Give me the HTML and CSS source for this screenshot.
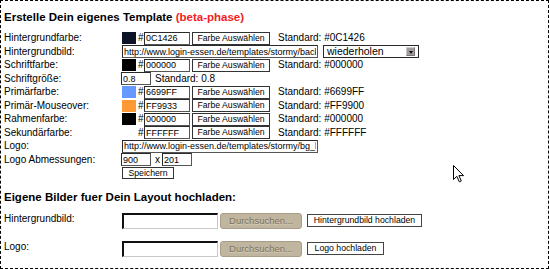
FILE: index.html
```html
<!DOCTYPE html>
<html lang="de">
<head>
<meta charset="utf-8">
<title>Template</title>
<link rel="stylesheet" href="styles.css">
</head>
<body>
<div class="page">
  <h1 class="title">Erstelle Dein eigenes Template <span class="beta">(beta-phase)</span></h1>
  <div class="form">
    <div class="lbl">Hintergrundfarbe:</div>
    <div class="ctl"><span class="sw sw-navy"></span><span class="hash">#</span><input class="inp hex" type="text" value="0C1426"><button class="btn pick">Farbe Auswählen</button><span class="std">Standard: #0C1426</span></div>

    <div class="lbl">Hintergrundbild:</div>
    <div class="ctl"><input class="inp url" type="text" value="http://www.login-essen.de/templates/stormy/backgrounds/bg.jpg"><span class="selwrap"><select class="sel"><option>wiederholen</option></select><span class="arrow"></span></span></div>

    <div class="lbl">Schriftfarbe:</div>
    <div class="ctl"><span class="sw sw-black"></span><span class="hash">#</span><input class="inp hex" type="text" value="000000"><button class="btn pick">Farbe Auswählen</button><span class="std">Standard: #000000</span></div>

    <div class="lbl">Schriftgröße:</div>
    <div class="ctl"><input class="inp small first" type="text" value="0.8"><span class="std std-near">Standard: 0.8</span></div>

    <div class="lbl">Primärfarbe:</div>
    <div class="ctl"><span class="sw sw-blue"></span><span class="hash">#</span><input class="inp hex" type="text" value="6699FF"><button class="btn pick">Farbe Auswählen</button><span class="std">Standard: #6699FF</span></div>

    <div class="lbl">Primär-Mouseover:</div>
    <div class="ctl"><span class="sw sw-orange"></span><span class="hash">#</span><input class="inp hex" type="text" value="FF9933"><button class="btn pick">Farbe Auswählen</button><span class="std">Standard: #FF9900</span></div>

    <div class="lbl">Rahmenfarbe:</div>
    <div class="ctl"><span class="sw sw-black"></span><span class="hash">#</span><input class="inp hex" type="text" value="000000"><button class="btn pick">Farbe Auswählen</button><span class="std">Standard: #000000</span></div>

    <div class="lbl">Sekundärfarbe:</div>
    <div class="ctl"><span class="sw sw-white"></span><span class="hash">#</span><input class="inp hex" type="text" value="FFFFFF"><button class="btn pick">Farbe Auswählen</button><span class="std">Standard: #FFFFFF</span></div>

    <div class="lbl">Logo:</div>
    <div class="ctl"><input class="inp url" type="text" value="http://www.login-essen.de/templates/stormy/bg_header.jpg"></div>

    <div class="lbl">Logo Abmessungen:</div>
    <div class="ctl"><input class="inp small first" type="text" value="900"><span class="times">x</span><input class="inp small" type="text" value="201"></div>

    <div class="lbl"></div>
    <div class="ctl"><button class="btn save">Speichern</button></div>
  </div>

  <h2 class="title sub">Eigene Bilder fuer Dein Layout hochladen:</h2>
  <div class="upload">
    <div class="lbl ulbl">Hintergrundbild:</div>
    <div class="ctl"><input class="file" type="text" value=""><button class="browse">Durchsuchen...</button><button class="btn up up-wide">Hintergrundbild hochladen</button></div>

    <div class="lbl ulbl">Logo:</div>
    <div class="ctl"><input class="file" type="text" value=""><button class="browse">Durchsuchen...</button><button class="btn up up-short">Logo hochladen</button></div>
  </div>

  <svg class="cursor" width="12" height="18" viewBox="0 0 12 18" aria-hidden="true">
    <path d="M0.5 0.5 L0.5 14.5 L3.8 11.3 L6.3 16.8 L8.3 15.9 L5.9 10.6 L10.5 10.6 Z" fill="#fff" stroke="#000" stroke-width="1" stroke-linejoin="miter"/>
  </svg>
</div>
</body>
</html>
```

FILE: styles.css
```css
html, body {
  margin: 0;
  padding: 0;
  background: #fff;
}

.page {
  position: relative;
  width: 549px;
  height: 269px;
  box-sizing: border-box;
  border: 1px dashed #000;
  padding: 9px 0 0 3px;
  font-family: "Liberation Sans", Arial, sans-serif;
  font-size: 10px;
  color: #000;
  background: #fff;
}

.title {
  margin: 0;
  font-size: 11.5px;
  line-height: 14px;
  font-weight: bold;
}

.beta {
  color: #f22222;
}

.form {
  margin-top: 7.5px;
  display: grid;
  grid-template-columns: 118px 1fr;
  grid-auto-rows: 13.5px;
  align-items: center;
}

.lbl {
  line-height: 12px;
  white-space: nowrap;
}

.ctl {
  display: flex;
  align-items: center;
  height: 100%;
}

.sw {
  width: 14px;
  height: 12px;
  margin-right: 2px;
  flex: none;
}
.sw-navy { background: #0c1426; }
.sw-black { background: #000; }
.sw-blue { background: #6699ff; }
.sw-orange { background: #ff9933; }
.sw-white { background: #fff; }

.hash {
  width: 6px;
  line-height: 12px;
}

.inp {
  box-sizing: border-box;
  height: 13px;
  margin: 0;
  padding: 0 1px;
  border: 1px solid #2a2a2a;
  border-right-color: #555;
  border-bottom-color: #555;
  background: #fff;
  font-family: "Liberation Sans", Arial, sans-serif;
  font-size: 9px;
  color: #000;
  outline: none;
}

.hex { width: 46px; }
.url { width: 196px; }
.small { width: 30px; }
.first { margin-left: -1px; }

.btn {
  box-sizing: border-box;
  margin: 0;
  padding: 0;
  height: 13px;
  background: #fff;
  border: 1px solid #333;
  font-family: "Liberation Sans", Arial, sans-serif;
  font-size: 8.7px;
  line-height: 1;
  color: #000;
}

.pick {
  width: 78px;
  margin-left: 2px;
}

.std {
  margin-left: 8px;
  line-height: 12px;
  white-space: nowrap;
}
.std-near { margin-left: 4px; }

.times {
  width: 7px;
  margin-left: 4px;
  line-height: 12px;
}

.save {
  width: 52px;
  height: 12px;
}

.selwrap {
  position: relative;
  display: inline-block;
  margin-left: 5px;
  height: 13px;
}

.sel {
  appearance: none;
  -webkit-appearance: none;
  box-sizing: border-box;
  width: 96px;
  height: 13px;
  margin: 0;
  padding: 0 0 0 3px;
  border: 1px solid #2a2a2a;
  border-radius: 0;
  background: #fff;
  font-family: "Liberation Sans", Arial, sans-serif;
  font-size: 10.5px;
  line-height: 11px;
  color: #000;
}

.arrow {
  position: absolute;
  right: 4px;
  top: 2px;
  width: 9px;
  height: 9px;
  box-sizing: border-box;
  background: #a49c9c;
  border: 1px solid #777;
  border-top-color: #ccc;
  border-left-color: #ccc;
}
.arrow::after {
  content: "";
  position: absolute;
  left: 1.5px;
  top: 2.5px;
  border-left: 2.5px solid transparent;
  border-right: 2.5px solid transparent;
  border-top: 3px solid #111;
}

.sub {
  margin-top: 9.5px;
}

.upload {
  margin-top: 9px;
  display: grid;
  grid-template-columns: 118px 1fr;
  grid-auto-rows: 16px;
  row-gap: 12px;
  align-items: center;
}

.ulbl {
  align-self: start;
}

.file {
  box-sizing: border-box;
  width: 96px;
  height: 16px;
  margin: 0;
  padding: 0 2px;
  border: 2px solid #111;
  border-right: 1px solid #c8c8c8;
  border-bottom: 1px solid #c8c8c8;
  background: #fff;
  outline: none;
}

.browse {
  box-sizing: border-box;
  width: 82px;
  height: 16px;
  margin: 0 0 0 2px;
  padding: 0;
  border: 1px solid #a89e88;
  border-radius: 3px;
  background: #c0b69f;
  font-family: "Liberation Sans", Arial, sans-serif;
  font-size: 9.5px;
  color: #7c725f;
  text-shadow: 0 1px 0 #d8d0bd;
}

.up {
  margin-left: 5px;
  height: 13px;
  border: 1px solid #444;
}
.up-wide { width: 115px; }
.up-short { width: 77px; }

.cursor {
  position: absolute;
  left: 452px;
  top: 164px;
}
```
